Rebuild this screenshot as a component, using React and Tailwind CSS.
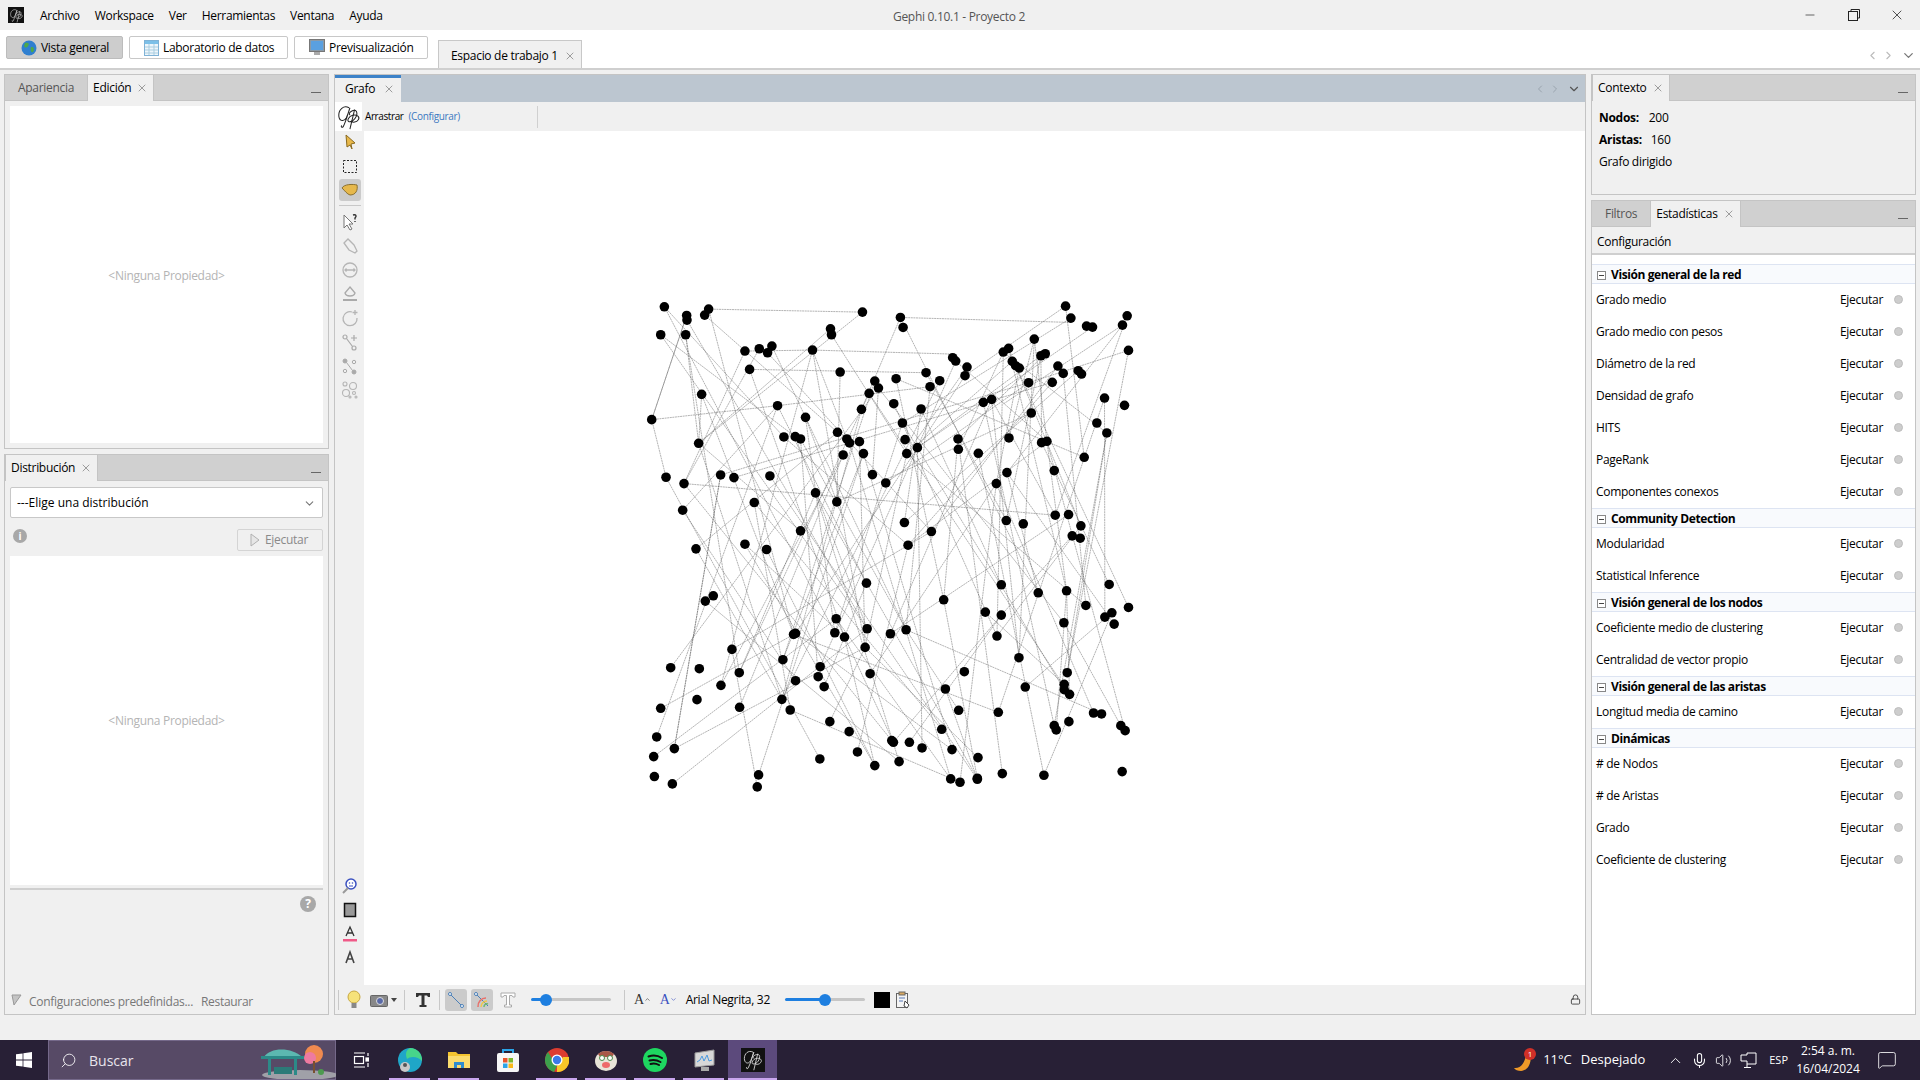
import { Minus, X, ChevronLeft, ChevronRight, ChevronDown, ChevronUp, Mic, Volume2, MessageSquare, Search, Lock } from 'lucide-react';

// nodes read off the reference, in zoom-crop coordinates (3x)
const topNodes = [
  [72,48],[139,74],[140,88],[205,55],[193,73],[61,132],[136,132],[667,64],[781,80],[789,110],[571,114],[574,132],[1277,46],[1293,82],[1340,106],[1358,109],[1462,75],[1448,103],[1466,179],[314,181],[357,174],[395,166],[382,186],[517,178],[1183,145],[1106,173],[1090,184],[1203,195],[1216,189],[938,201],[947,211],[981,229],[975,255],[1117,212],[1127,225],[1138,232],[1254,226],[1270,248],[1315,240],[1325,250],[328,236],[600,244],[858,246],[768,264],[704,271],[715,292],[899,270],[870,288],[687,308],[1166,276],[1237,275],[184,311],[412,345],[761,339],[843,355],[664,356],[1030,335],[1055,326],[1394,322],[1454,344],[34,387],[496,380],[1174,367],[787,397],[1371,397],[1401,427],[431,439],[465,438],[481,445],[592,425],[620,445],[628,457],[658,453],[175,458],[795,447],[832,471],[954,445],[955,476],[1107,442],[1205,456],[1221,452],[609,493],[670,489],[800,489],[1015,488],[1333,500],[77,560],[131,579],[241,553],[281,561],[389,556],[697,552],[737,577],[1101,546],[1243,540],[1069,579],[526,607],[590,634],[342,636],[127,659],[1246,674],[1286,672],[793,696],[1099,690],[1150,700],[1323,706],[481,721],[874,723],[1297,736],[1321,743],
];
const bottomNodes = [
  [167,25],[314,11],[379,27],[804,14],[679,128],[1084,133],[1195,157],[1280,151],[1408,132],[219,166],[195,182],[911,178],[1338,195],[1466,201],[1036,215],[1084,224],[1395,230],[1416,217],[1423,251],[1272,247],[588,235],[584,277],[613,290],[466,279],[460,282],[681,265],[751,280],[798,268],[1071,287],[275,327],[675,321],[1137,352],[428,358],[91,382],[177,385],[540,379],[297,397],[534,409],[690,400],[973,394],[1282,397],[466,421],[552,439],[242,435],[916,446],[1156,440],[1273,432],[1273,448],[1289,462],[170,478],[425,477],[61,504],[298,501],[450,509],[956,510],[1075,516],[1361,518],[1385,521],[569,544],[627,574],[49,590],[905,567],[1243,556],[1249,569],[1287,544],[1443,556],[1456,571],[102,625],[755,601],[760,606],[808,606],[846,623],[936,628],[40,649],[539,656],[652,635],[704,676],[777,664],[1014,652],[42,709],[96,731],[355,704],[351,740],[932,716],[960,726],[1012,714],[1012,717],[1087,700],[1212,705],[1447,694],
];
const nodes = [
  ...topNodes.map(([x, y]) => [640 + x / 3, 290 + y / 3]),
  ...bottomNodes.map(([x, y]) => [640 + x / 3, 540 + y / 3]),
];

// the edges are too many to trace, so a fixed seed picks long, mostly steep ones
function makeEdges() {
  let seed = 12345;
  const rnd = () => {
    seed = (seed * 1103515245 + 12345) & 0x7fffffff;
    return seed / 0x7fffffff;
  };
  const edges = [];
  nodes.forEach((a, i) => {
    if (i % 5 === 4) return;
    for (let t = 0; t < 20; t++) {
      const b = nodes[Math.floor(rnd() * nodes.length)];
      const dy = Math.abs(b[1] - a[1]);
      const dx = Math.abs(b[0] - a[0]);
      if (dy < 70 || dx > 210 || dy > 340) continue;
      edges.push([a, b]);
      break;
    }
  });
  return edges;
}
const edges = makeEdges();

const handEdges = [
  [[205,55],[667,64]],[[781,80],[1293,95]],[[517,178],[938,190]],[[314,181],[517,178]],[[328,236],[858,246]],
  [[34,387],[412,345]],[[412,345],[870,288]],[[241,553],[1166,276]],[[281,561],[1237,275]],[[131,579],[1246,674]],
  [[34,387],[77,560]],[[175,458],[184,311]],[[136,132],[175,458]],[[72,48],[431,439]],[[193,73],[592,425]],
  [[127,659],[412,345]],[[1277,46],[975,255]],[[1466,179],[1166,276]],[[1448,103],[1090,340]],
].map(([a, b]) => [[640 + a[0] / 3, 290 + a[1] / 3], [640 + b[0] / 3, 290 + b[1] / 3]]);

const stats = [
  { title: 'Visión general de la red', rows: ['Grado medio', 'Grado medio con pesos', 'Diámetro de la red', 'Densidad de grafo', 'HITS', 'PageRank', 'Componentes conexos'] },
  { title: 'Community Detection', rows: ['Modularidad', 'Statistical Inference'] },
  { title: 'Visión general de los nodos', rows: ['Coeficiente medio de clustering', 'Centralidad de vector propio'] },
  { title: 'Visión general de las aristas', rows: ['Longitud media de camino'] },
  { title: 'Dinámicas', rows: ['# de Nodos', '# de Aristas', 'Grado', 'Coeficiente de clustering'] },
];

function GephiLogo({ size = 28, color = '#222' }) {
  return (
    <svg width={size} height={size} viewBox="0 0 28 28" fill="none" stroke={color} strokeWidth="1.1">
      <path d="M14 4 C8 1 3 6 3 12 C3 18 8 20 11 15 C13 11 14 7 15 4 C13 10 11 18 8 24 C7 26 5 25 6 23" />
      <path d="M15 12 C12 9 20 5 22 8 C24 12 19 20 14 19 C11 18 14 13 18 12 C23 11 26 14 24 17 C22 20 18 20 17 19" />
      <path d="M20 6 L15 27" />
    </svg>
  );
}

function PanelTab({ label, active, closable }) {
  return (
    <div className={active
      ? 'flex items-center h-[27px] px-[5px] gap-[5px] bg-[#f0f0f0] border-r border-l border-t border-[#c4c4c4] text-black'
      : 'flex items-center h-[27px] px-[13px] text-[#555]'}>
      <span>{label}</span>
      {closable && <X size={12} strokeWidth={1.4} className="text-[#777]" />}
    </div>
  );
}

function Panel({ tabs, className, children }) {
  return (
    <div className={`flex flex-col border border-[#c4c4c4] bg-[#f0f0f0] ${className}`}>
      <div className="flex items-center h-[26px] shrink-0 bg-[#d0d0d0] border-b border-[#c4c4c4]">
        {tabs}
        <div className="ml-auto mr-[7px] mt-[9px] w-[10px] h-px bg-[#666]" />
      </div>
      {children}
    </div>
  );
}

function NavButton({ icon, label, active, className }) {
  return (
    <div className={`flex items-center h-[23px] gap-[4px] rounded-[2px] border ${active ? 'bg-[#cdcdcd] border-[#bcbcbc]' : 'bg-white border-[#c8c8c8]'} ${className}`}>
      {icon}
      <span>{label}</span>
    </div>
  );
}

function GlobeIcon() {
  return (
    <svg width="16" height="16" viewBox="0 0 16 16">
      <circle cx="8" cy="8" r="7.5" fill="#2f7fd0" />
      <path d="M4 3 C7 2 9 4 7 6 C6 8 4 8 3 6 Z M10 7 C13 7 14 9 12 12 C10 13 9 10 10 7 Z" fill="#4ea84a" />
    </svg>
  );
}

function TableIcon() {
  return (
    <svg width="15" height="16" viewBox="0 0 15 16">
      <rect x="0.5" y="0.5" width="14" height="15" fill="#eef6fb" stroke="#7fb2d6" />
      <rect x="1" y="1" width="13" height="3" fill="#7cc0e8" />
      <path d="M1 7 H14 M1 10 H14 M1 13 H14 M5 4 V15 M10 4 V15" stroke="#a9cde0" strokeWidth="1" />
    </svg>
  );
}

function MonitorIcon() {
  return (
    <svg width="16" height="17" viewBox="0 0 16 17">
      <rect x="0.5" y="0.5" width="15" height="12" fill="#8a9aa8" stroke="#777" />
      <rect x="2" y="2" width="12" height="9" fill="#5aa0e0" />
      <rect x="5" y="13" width="6" height="3" fill="#aaa" />
    </svg>
  );
}

function Hint({ size = 16, q = 'i' }) {
  return (
    <span style={{ width: size, height: size, fontSize: size - 4 }} className="flex items-center justify-center rounded-full bg-[#a8a8a8] text-white font-bold">
      {q}
    </span>
  );
}

const toolTop = [
  <path key="a" d="M5 2 L14 10 L10 11 L11 16 L9 12 L6 14 Z" fill="#e8b84a" stroke="#8a6a20" />,
  <rect key="b" x="2.5" y="3.5" width="13" height="12" fill="none" stroke="#222" strokeDasharray="2 1.5" />,
  <path key="c" d="M1 7 C3 3 12 3 16 4 C17 9 15 14 9 14 C6 13 4 10 1 7 Z" fill="#e6b84c" stroke="#8a7030" />,
];
const toolGray = [
  <g key="q"><path d="M3 2 L3 15 L6 12 L9 17 L11 16 L8 11 L12 11 Z" fill="#fff" stroke="#777" /><path d="M12 2 C15 1 16 3 14 5 L14 6.5 M14 8 V9" fill="none" stroke="#333" strokeWidth="1.4" /></g>,
  <path key="d" d="M3 6 L7 2 L13 8 L16 14 L14 16 L8 13 Z" fill="none" stroke="#b5b5b5" strokeWidth="1.3" />,
  <g key="e" fill="none" stroke="#b5b5b5" strokeWidth="1.3"><circle cx="9" cy="9" r="7" /><path d="M4 9 H14 M5.5 7.5 L4 9 L5.5 10.5 M12.5 7.5 L14 9 L12.5 10.5" /></g>,
  <g key="f" fill="none" stroke="#aaa" strokeWidth="1.3"><path d="M9 2 L14 8 C13 12 5 12 4 8 Z" /><path d="M2 15 H16" strokeWidth="2" /></g>,
  <g key="g" fill="none" stroke="#b5b5b5" strokeWidth="1.3"><path d="M11 3 A7 7 0 1 0 16 9" /><path d="M14 1 V6 M11.5 3.5 H16.5" /></g>,
  <g key="h" fill="none" stroke="#aaa" strokeWidth="1.2"><circle cx="4" cy="4" r="2" /><circle cx="13" cy="15" r="2" /><path d="M5.5 5.5 L11.5 13.5 M13 2 V8 M10 5 H16" /></g>,
  <g key="i" fill="#aaa" stroke="#aaa"><circle cx="4" cy="4" r="2" /><circle cx="13" cy="15" r="2" /><path d="M5.5 5.5 L11.5 13.5" /><circle cx="13" cy="5" r="1.7" fill="none" /><circle cx="4" cy="14" r="1.7" fill="none" /></g>,
  <g key="j" fill="none" stroke="#b5b5b5" strokeWidth="1.1"><circle cx="4" cy="3" r="2" /><circle cx="12" cy="5" r="3.5" /><circle cx="5" cy="12" r="3.5" /><circle cx="13" cy="12" r="1.5" /><circle cx="15" cy="16" r="1" /><circle cx="9" cy="16" r="1" /></g>,
];

function Tool({ children, active }) {
  return (
    <div className={`flex items-center justify-center w-[22px] h-[22px] rounded-[3px] ${active ? 'bg-[#cbcbcb]' : ''}`}>
      <svg width="18" height="18" viewBox="0 0 18 18">{children}</svg>
    </div>
  );
}

function Slider({ className, knob }) {
  return (
    <div className={`relative flex items-center h-[16px] ${className}`}>
      <div className="h-[3px] bg-[#1e7fe0] rounded-l-sm" style={{ width: knob }} />
      <div className="h-[3px] flex-1 bg-[#c6c6c6] rounded-r-sm" />
      <div className="absolute w-[12px] h-[12px] rounded-full bg-[#1e7fe0]" style={{ left: knob - 6 }} />
    </div>
  );
}

function Separator() {
  return <div className="w-px h-[20px] bg-[#c8c8c8]" />;
}

function TaskIcon({ children, active, mark = true }) {
  return (
    <div className={`relative flex items-center justify-center w-[49px] h-[40px] ${active ? 'bg-[#5c4a7c]' : ''}`}>
      {children}
      {mark && <div className={`absolute bottom-0 h-[2px] bg-[#c9a6ee] ${active ? 'inset-x-0' : 'inset-x-[4px]'}`} />}
    </div>
  );
}

export default function App() {
  return (
    <div className="flex flex-col w-[1920px] h-[1080px] overflow-hidden bg-[#f0f0f0] text-[12px] text-black font-['Open_Sans',sans-serif] tracking-[-0.3px]">
      {/* title bar */}
      <div className="relative flex items-center h-[30px] shrink-0 bg-[#f0f0f0]">
        <div className="flex items-center justify-center w-[16px] h-[16px] ml-[8px] bg-[#111]">
          <GephiLogo size={15} color="#ddd" />
        </div>
        <div className="flex gap-[15px] ml-[16px] pt-[1px]">
          {['Archivo', 'Workspace', 'Ver', 'Herramientas', 'Ventana', 'Ayuda'].map((m) => (
            <span key={m}>{m}</span>
          ))}
        </div>
        <span className="absolute left-[893px] top-[8px] text-[#555]">Gephi 0.10.1 - Proyecto 2</span>
        <div className="ml-auto flex items-center mr-[1px]">
          <div className="w-[44px] flex justify-center"><Minus size={14} strokeWidth={1} /></div>
          <div className="w-[43px] flex justify-center">
            <svg width="12" height="12" viewBox="0 0 12 12" fill="none" stroke="#222"><rect x="0.5" y="2.5" width="9" height="9" /><path d="M3 2.5 V0.5 H11.5 V9 H9.5" /></svg>
          </div>
          <div className="w-[44px] flex justify-center"><X size={16} strokeWidth={1} /></div>
        </div>
      </div>

      {/* perspective bar */}
      <div className="flex items-end h-[40px] shrink-0 bg-white border-b-2 border-[#cfcfcf] pl-[6px]">
        <div className="flex gap-[6px] self-start mt-[6px]">
          <NavButton active label="Vista general" icon={<GlobeIcon />} className="w-[117px] pl-[14px]" />
          <NavButton label="Laboratorio de datos" icon={<TableIcon />} className="w-[159px] pl-[14px]" />
          <NavButton label="Previsualización" icon={<MonitorIcon />} className="w-[134px] pl-[14px]" />
        </div>
        <div className="flex items-center gap-[6px] h-[28px] w-[144px] ml-[10px] pl-[12px] pt-[2px] bg-[#f0f0f0] border border-b-0 border-[#c8c8c8]">
          <span>Espacio de trabajo 1</span>
          <X size={12} strokeWidth={1.4} className="text-[#777]" />
        </div>
        <div className="ml-auto flex items-center gap-[3px] self-center mt-[12px] mr-[4px] text-[#bbb]">
          <ChevronLeft size={13} />
          <ChevronRight size={13} />
          <ChevronDown size={15} className="ml-[3px] text-[#777]" />
        </div>
      </div>

      {/* main area */}
      <div className="flex flex-1 min-h-0 gap-[5px] px-[4px] pt-[4px] pb-[25px]">
        {/* left column */}
        <div className="flex flex-col w-[325px] shrink-0 gap-[5px]">
          <Panel
            className="h-[375px] shrink-0"
            tabs={<><PanelTab label="Apariencia" /><PanelTab label="Edición" active closable /></>}
          >
            <div className="flex flex-1 items-center justify-center m-[5px] pt-[2px] bg-white text-[#b4b4b4]">&lt;Ninguna Propiedad&gt;</div>
          </Panel>
          <Panel className="flex-1 min-h-0" tabs={<PanelTab label="Distribución" active closable />}>
            <div className="flex items-center justify-between h-[31px] shrink-0 mx-[5px] mt-[6px] px-[6px] pt-[1px] bg-white border border-[#c8c8c8] rounded-[2px]">
              <span className="text-[12px] tracking-normal">---Elige una distribución</span>
              <ChevronDown size={13} className="text-[#777]" />
            </div>
            <div className="flex items-start justify-between h-[38px] shrink-0 mx-[5px] pt-[11px]">
              <div className="ml-[3px]"><Hint size={14} /></div>
              <div className="flex items-center gap-[5px] w-[86px] h-[22px] pl-[12px] border border-[#d4d4d4] rounded-[2px] text-[#8a8a8a]">
                <svg width="10" height="14" viewBox="0 0 10 14"><path d="M1 1 L9 7 L1 13 Z" fill="#e6e6e6" stroke="#b0b0b0" /></svg>
                <span>Ejecutar</span>
              </div>
            </div>
            <div className="flex items-center justify-center h-[329px] shrink-0 mx-[5px] pt-[1px] bg-white text-[#b4b4b4]">&lt;Ninguna Propiedad&gt;</div>
            <div className="h-[2px] mx-[5px] mt-[3px] bg-[#cfcfcf]" />
            <div className="flex justify-end mt-[6px] mr-[12px]"><Hint size={16} q="?" /></div>
            <div className="flex items-center gap-[8px] mt-auto mb-[3px] pl-[6px] text-[#777]">
              <svg width="11" height="12" viewBox="0 0 11 12" className="-mt-[4px]"><path d="M1 1 H10 L3 11 Z" fill="#c4c4c4" stroke="#999" /></svg>
              <span className="-ml-[1px]">Configuraciones predefinidas...</span>
              <span>Restaurar</span>
            </div>
          </Panel>
        </div>

        {/* graph panel */}
        <div className="flex flex-col flex-1 min-w-0 border border-[#c4c4c4] bg-[#f0f0f0]">
          <div className="flex items-center h-[27px] shrink-0 bg-[#bcc6d0]">
            <div className="flex items-center gap-[8px] w-[66px] h-full pl-[10px] pb-[3px] bg-[#f0f0f0] border-t-[3px] border-[#3c82c8]">
              <span>Grafo</span>
              <X size={12} strokeWidth={1.4} className="text-[#777]" />
            </div>
            <div className="ml-auto flex items-center gap-[3px] mr-[4px] text-[#9aa4ae]">
              <ChevronLeft size={12} />
              <ChevronRight size={12} />
              <ChevronDown size={14} className="ml-[3px] text-[#555]" />
            </div>
          </div>
          <div className="flex items-center h-[29px] shrink-0">
            <div className="flex items-center justify-center w-[27px] h-full bg-white"><GephiLogo size={26} /></div>
            <span className="ml-[3px] text-[10px] tracking-[-0.4px]">Arrastrar</span>
            <span className="ml-[5px] text-[10px] tracking-[-0.35px] text-[#3c78c0]">(Configurar)</span>
            <div className="w-px h-[22px] ml-[77px] bg-[#d0d0d0]" />
          </div>
          <div className="flex flex-1 min-h-0">
            <div className="flex flex-col items-center w-[29px] shrink-0 pb-[16px] gap-[2px]">
              {toolTop.map((t, i) => <Tool key={i} active={i === 2}>{t}</Tool>)}
              <div className="w-[22px] h-px mt-[2px] mb-[3px] bg-[#c8c8c8]" />
              {toolGray.map((t, i) => <Tool key={i}>{t}</Tool>)}
              <div className="mt-auto flex flex-col items-center gap-[2px]">
                <Tool>
                  <circle cx="10" cy="7" r="5" fill="#fff" stroke="#3a50c0" strokeWidth="1.5" />
                  <path d="M7 11 L2 16" stroke="#999" strokeWidth="2" />
                  <circle cx="8.5" cy="6" r="0.8" fill="#3a50c0" /><circle cx="11.5" cy="6" r="0.8" fill="#3a50c0" /><path d="M8 9 H12" stroke="#3a50c0" />
                </Tool>
                <Tool><rect x="3.5" y="2.5" width="11" height="13" fill="#999" stroke="#111" strokeWidth="1.5" /></Tool>
                <Tool>
                  <path d="M5 11 L9 2 L13 11 M6.5 8 H11.5" fill="none" stroke="#333" strokeWidth="1.3" />
                  <rect x="2" y="14" width="14" height="2.5" fill="#f05a88" />
                </Tool>
                <Tool><path d="M5 14 L9 3 L13 14 M6.5 10 H11.5" fill="none" stroke="#444" strokeWidth="1.6" /></Tool>
              </div>
            </div>
            <div className="flex-1 min-w-0 bg-white">
              <svg viewBox="363.5 130 1222 855" className="block w-full h-full">
                {[...edges, ...handEdges].map(([a, b], i) => (
                  <line key={i} x1={a[0]} y1={a[1]} x2={b[0]} y2={b[1]} stroke="#555" strokeWidth="0.45" strokeDasharray="2 0.6" />
                ))}
                {nodes.map(([x, y], i) => (
                  <circle key={i} cx={x} cy={y} r="4.8" fill="#000" />
                ))}
              </svg>
            </div>
          </div>
          {/* bottom graph toolbar */}
          <div className="flex items-center h-[29px] shrink-0 pl-[3px] bg-[#f0f0f0]">
            <Separator />
            <svg width="14" height="20" viewBox="0 0 14 20" className="ml-[8px]">
              <circle cx="7" cy="7" r="6" fill="#f6e27a" stroke="#c8a840" />
              <rect x="4.5" y="13" width="5" height="5" fill="#888" />
            </svg>
            <svg width="18" height="14" viewBox="0 0 18 14" className="ml-[9px]">
              <rect x="0.5" y="2.5" width="17" height="11" rx="1" fill="#888" stroke="#666" />
              <circle cx="10" cy="8" r="3.5" fill="#5a6aa8" stroke="#ddd" />
            </svg>
            <svg width="6" height="4" viewBox="0 0 6 4" className="ml-[3px]"><path d="M0 0 H6 L3 4 Z" fill="#444" /></svg>
            <div className="ml-[7px]"><Separator /></div>
            <svg width="18" height="18" viewBox="0 0 18 18" className="ml-[9px]">
              <path d="M2 2 H16 V6 H14 L13 4.5 H10.5 V14 H12.5 V16 H5.5 V14 H7.5 V4.5 H5 L4 6 H2 Z" fill="#333" />
            </svg>
            <div className="ml-[7px]"><Separator /></div>
            <div className="flex items-center justify-center w-[22px] h-[22px] ml-[5px] rounded-[3px] bg-[#cbcbcb]">
              <svg width="18" height="18" viewBox="0 0 18 18"><path d="M3 3 L15 15" stroke="#4a7fb8" /><circle cx="3" cy="3" r="1.5" fill="#fff" stroke="#4a7fb8" /><circle cx="15" cy="15" r="1.5" fill="#fff" stroke="#4a7fb8" /></svg>
            </div>
            <div className="flex items-center justify-center w-[22px] h-[22px] ml-[4px] rounded-[3px] bg-[#cbcbcb]">
              <svg width="18" height="18" viewBox="0 0 18 18" fill="none">
                <path d="M3 3 L15 15" stroke="#4a7fb8" />
                <path d="M5 16 A8 8 0 0 1 13 7" stroke="#e8706a" strokeWidth="1.5" />
                <path d="M8 16 A6 6 0 0 1 14 10" stroke="#f0c84a" strokeWidth="1.5" />
                <path d="M11 16 A3 3 0 0 1 15 13" stroke="#70b870" strokeWidth="1.5" />
                <circle cx="3" cy="3" r="1.5" fill="#fff" stroke="#4a7fb8" />
              </svg>
            </div>
            <svg width="18" height="18" viewBox="0 0 18 18" className="ml-[6px]">
              <path d="M2 2 H16 V6 H14 L13 4.5 H10.5 V14 H12.5 V16 H5.5 V14 H7.5 V4.5 H5 L4 6 H2 Z" fill="#fff" stroke="#aaa" />
            </svg>
            <Slider className="w-[80px] ml-[14px]" knob={15} />
            <div className="ml-[13px]"><Separator /></div>
            <span className="ml-[9px] text-[14px] font-['Liberation_Serif',serif] text-[#333]">A</span>
            <ChevronUp size={7} className="text-[#333]" />
            <span className="ml-[9px] text-[14px] font-['Liberation_Serif',serif] text-[#3a50c0]">A</span>
            <ChevronDown size={7} className="text-[#3a50c0]" />
            <span className="ml-[9px]">Arial Negrita, 32</span>
            <Slider className="w-[80px] ml-[15px]" knob={40} />
            <div className="w-[16px] h-[16px] ml-[9px] bg-black" />
            <svg width="16" height="18" viewBox="0 0 16 18" className="ml-[5px]">
              <rect x="1.5" y="2.5" width="11" height="14" fill="#f4f4f4" stroke="#666" />
              <rect x="4" y="1" width="6" height="3" fill="#d8a860" stroke="#666" />
              <path d="M4 7 H10 M4 10 H8" stroke="#5a7ab8" />
              <path d="M10 10 L14 14 L12 17 L9 15 Z" fill="#fff" stroke="#444" />
            </svg>
            <div className="ml-auto mr-[4px] text-[#444]"><Lock size={11} /></div>
          </div>
        </div>

        {/* right column */}
        <div className="flex flex-col w-[325px] shrink-0 gap-[5px]">
          <Panel className="h-[121px] shrink-0" tabs={<PanelTab label="Contexto" active closable />}>
            <div className="flex flex-col gap-[4px] pl-[7px] pt-[8px] leading-[18px]">
              <div><span className="font-bold">Nodos:</span><span className="ml-[10px]">200</span></div>
              <div><span className="font-bold">Aristas:</span><span className="ml-[9px]">160</span></div>
              <div>Grafo dirigido</div>
            </div>
          </Panel>
          <Panel
            className="flex-1 min-h-0"
            tabs={<><PanelTab label="Filtros" /><PanelTab label="Estadísticas" active closable /></>}
          >
            <div className="flex items-center h-[28px] shrink-0 pl-[5px] pt-[3px] border-b-2 border-[#cfcfcf]">Configuración</div>
            <div className="flex-1 bg-white pt-[9px]">
              {stats.map((group) => (
                <div key={group.title}>
                  <div className="flex items-center h-[20px] pl-[5px] gap-[5px] pt-[2px] bg-[#f8fafd] border-y border-[#dde4f2] font-bold tracking-[-0.4px]">
                    <span className="flex items-center justify-center w-[9px] h-[9px] border border-[#888] bg-white">
                      <span className="w-[5px] h-px bg-[#444]" />
                    </span>
                    <span>{group.title}</span>
                  </div>
                  {group.rows.map((row) => (
                    <div key={row} className="flex items-center h-[32px] pl-[4px]">
                      <span>{row}</span>
                      <span className="ml-auto">Ejecutar</span>
                      <span className="w-[9px] h-[9px] ml-[11px] mr-[12px] -mt-[2px] rounded-full bg-[#cdcdcd] border border-[#bdbdbd]" />
                    </div>
                  ))}
                </div>
              ))}
            </div>
          </Panel>
        </div>
      </div>

      {/* windows taskbar */}
      <div className="flex items-center h-[40px] shrink-0 bg-[#282036] text-white text-[14px] tracking-normal">
        <div className="flex items-center justify-center w-[48px]">
          <svg width="16" height="16" viewBox="0 0 16 16" fill="#fff"><path d="M0 2.3 L6.6 1.4 V7.5 H0 Z M7.4 1.3 L16 0 V7.5 H7.4 Z M0 8.5 H6.6 V14.6 L0 13.7 Z M7.4 8.5 H16 V16 L7.4 14.7 Z" /></svg>
        </div>
        <div className="flex items-center w-[288px] h-full pl-[11px] bg-[#574a66] border border-[#75698a]">
          <Search size={17} strokeWidth={1.2} className="-scale-x-100" />
          <span className="ml-[12px] text-[#e8e4ec]">Buscar</span>
          <svg width="78" height="38" viewBox="0 0 78 38" className="ml-auto mr-[-1px]">
            <ellipse cx="42" cy="34" rx="38" ry="5" fill="#a0a0a8" />
            <path d="M6 16 C12 6 34 6 44 16 Z" fill="#5cb8b0" />
            <path d="M3 15 H46 V18 H3 Z" fill="#2c8a88" />
            <rect x="10" y="18" width="3" height="16" fill="#2c8a88" />
            <rect x="36" y="18" width="3" height="16" fill="#2c8a88" />
            <rect x="16" y="26" width="18" height="7" fill="#2c7a78" />
            <circle cx="56" cy="13" r="9" fill="#f08a50" />
            <circle cx="52" cy="17" r="6" fill="#ee7aa0" />
            <rect x="55" y="20" width="2" height="12" fill="#7a5030" />
            <circle cx="63" cy="31" r="3" fill="#4c9a50" />
          </svg>
        </div>
        <div className="flex items-center justify-center w-[49px]">
          <svg width="16" height="16" viewBox="0 0 16 16" fill="none" stroke="#fff" strokeWidth="1.2">
            <path d="M1 1 H12 M1 15 H12" /><rect x="1.5" y="4.5" width="9" height="7" /><path d="M15 1 V4 M15 11 V15" /><rect x="13" y="6" width="2.5" height="3" fill="#fff" />
          </svg>
        </div>
        <TaskIcon>
          <svg width="24" height="24" viewBox="0 0 24 24">
            <circle cx="12" cy="12" r="12" fill="#1fa6c8" />
            <path d="M12 0 A12 12 0 0 1 24 13 C20 8 12 8 9 11 C7 6 8 2 12 0 Z" fill="#47d58a" />
            <circle cx="7" cy="19" r="5" fill="#c8c8c8" />
            <circle cx="7" cy="17" r="2" fill="#555" />
          </svg>
        </TaskIcon>
        <TaskIcon>
          <svg width="22" height="20" viewBox="0 0 22 20">
            <path d="M0 2 H8 L10 4 H22 V18 H0 Z" fill="#f4c430" />
            <path d="M0 6 H22 V18 H0 Z" fill="#fbdc6e" />
            <path d="M6 18 V12 H16 V18 H13 V15 H9 V18 Z" fill="#2e8ccf" />
          </svg>
        </TaskIcon>
        <TaskIcon mark={false}>
          <svg width="24" height="24" viewBox="0 0 24 24">
            <path d="M7 6 V2 H17 V6" fill="none" stroke="#2aa4e8" strokeWidth="2" />
            <rect x="1" y="5" width="22" height="19" rx="2" fill="#f6f6f6" />
            <rect x="7" y="10" width="4.5" height="4.5" fill="#e8552c" />
            <rect x="12.5" y="10" width="4.5" height="4.5" fill="#7cb82c" />
            <rect x="7" y="15.5" width="4.5" height="4.5" fill="#2aa4e8" />
            <rect x="12.5" y="15.5" width="4.5" height="4.5" fill="#f8b818" />
          </svg>
        </TaskIcon>
        <TaskIcon>
          <svg width="24" height="24" viewBox="0 0 24 24">
            <circle cx="12" cy="12" r="12" fill="#dc3c30" />
            <path d="M1.6 18 A12 12 0 0 1 3 4 L8 12 L12 18 L9 24 A12 12 0 0 1 1.6 18 Z" fill="#3ca04c" />
            <path d="M12 24 L12 18 L18 9 H24 A12 12 0 0 1 12 24 Z" fill="#f8c828" />
            <circle cx="12" cy="12" r="5.5" fill="#fff" />
            <circle cx="12" cy="12" r="4.2" fill="#3a7ae8" />
          </svg>
        </TaskIcon>
        <TaskIcon>
          <svg width="24" height="24" viewBox="0 0 24 24">
            <ellipse cx="12" cy="13" rx="11" ry="10" fill="#e8e4d8" />
            <path d="M4 6 C8 2 16 2 20 6 L18 9 H6 Z" fill="#a85848" />
            <circle cx="8" cy="10" r="2.5" fill="#fff" stroke="#4a8a4a" />
            <circle cx="16" cy="10" r="2.5" fill="#fff" stroke="#4a8a4a" />
            <ellipse cx="12" cy="17" rx="4" ry="3" fill="#ee6a6a" />
          </svg>
        </TaskIcon>
        <TaskIcon>
          <svg width="24" height="24" viewBox="0 0 24 24" fill="none">
            <circle cx="12" cy="12" r="12" fill="#1ed760" />
            <path d="M5.5 8.5 C10 7 15 7.5 19 10 M6.5 12.5 C10 11.5 14 12 17.5 14 M7.5 16 C10.5 15.2 13.5 15.6 16 17" stroke="#111" strokeWidth="2" strokeLinecap="round" />
          </svg>
        </TaskIcon>
        <TaskIcon>
          <svg width="24" height="24" viewBox="0 0 24 24">
            <path d="M3 5 L22 2 V17 L3 19 Z" fill="#d8d8d8" stroke="#999" />
            <path d="M5 14 L8 12 L10 8 L12 13 L15 7 L17 13 L20 12" fill="none" stroke="#4a9ae0" />
            <rect x="9" y="19" width="8" height="4" fill="#aaa" />
          </svg>
        </TaskIcon>
        <TaskIcon active>
          <div className="flex items-center justify-center w-[24px] h-[24px] bg-[#111]"><GephiLogo size={22} color="#ddd" /></div>
        </TaskIcon>

        <div className="ml-auto flex items-center h-full">
          <svg width="24" height="28" viewBox="0 0 24 28" className="mr-[6px]">
            <path d="M17 6 C19 14 17 24 8 25 C5 25 2 24 1 22 C8 23 12 16 13 9 Z" fill="#f09a28" />
            <circle cx="17" cy="8" r="6" fill="#d03028" />
            <text x="17" y="11" textAnchor="middle" fontSize="8" fill="#fff">1</text>
          </svg>
          <span className="text-[13px]">11°C</span>
          <span className="ml-[9px] text-[13px]">Despejado</span>
          <ChevronUp size={17} strokeWidth={1.3} className="ml-[22px]" />
          <Mic size={17} strokeWidth={1.5} className="ml-[7px]" />
          <Volume2 size={17} strokeWidth={1.2} className="ml-[7px]" />
          <svg width="17" height="17" viewBox="0 0 17 17" fill="none" stroke="#fff" className="ml-[8px]">
            <path d="M1 3 H7 V1 H16 V12 H7 M1 3 V9 H7 V15 M4 15.5 H11" />
          </svg>
          <span className="ml-[12px] text-[11px]">ESP</span>
          <div className="flex flex-col items-center w-[70px] ml-[5px] text-[12px] leading-[18px]">
            <span>2:54 a. m.</span>
            <span>16/04/2024</span>
          </div>
          <MessageSquare size={20} strokeWidth={1} className="ml-[14px] mr-[23px]" />
        </div>
      </div>
    </div>
  );
}
